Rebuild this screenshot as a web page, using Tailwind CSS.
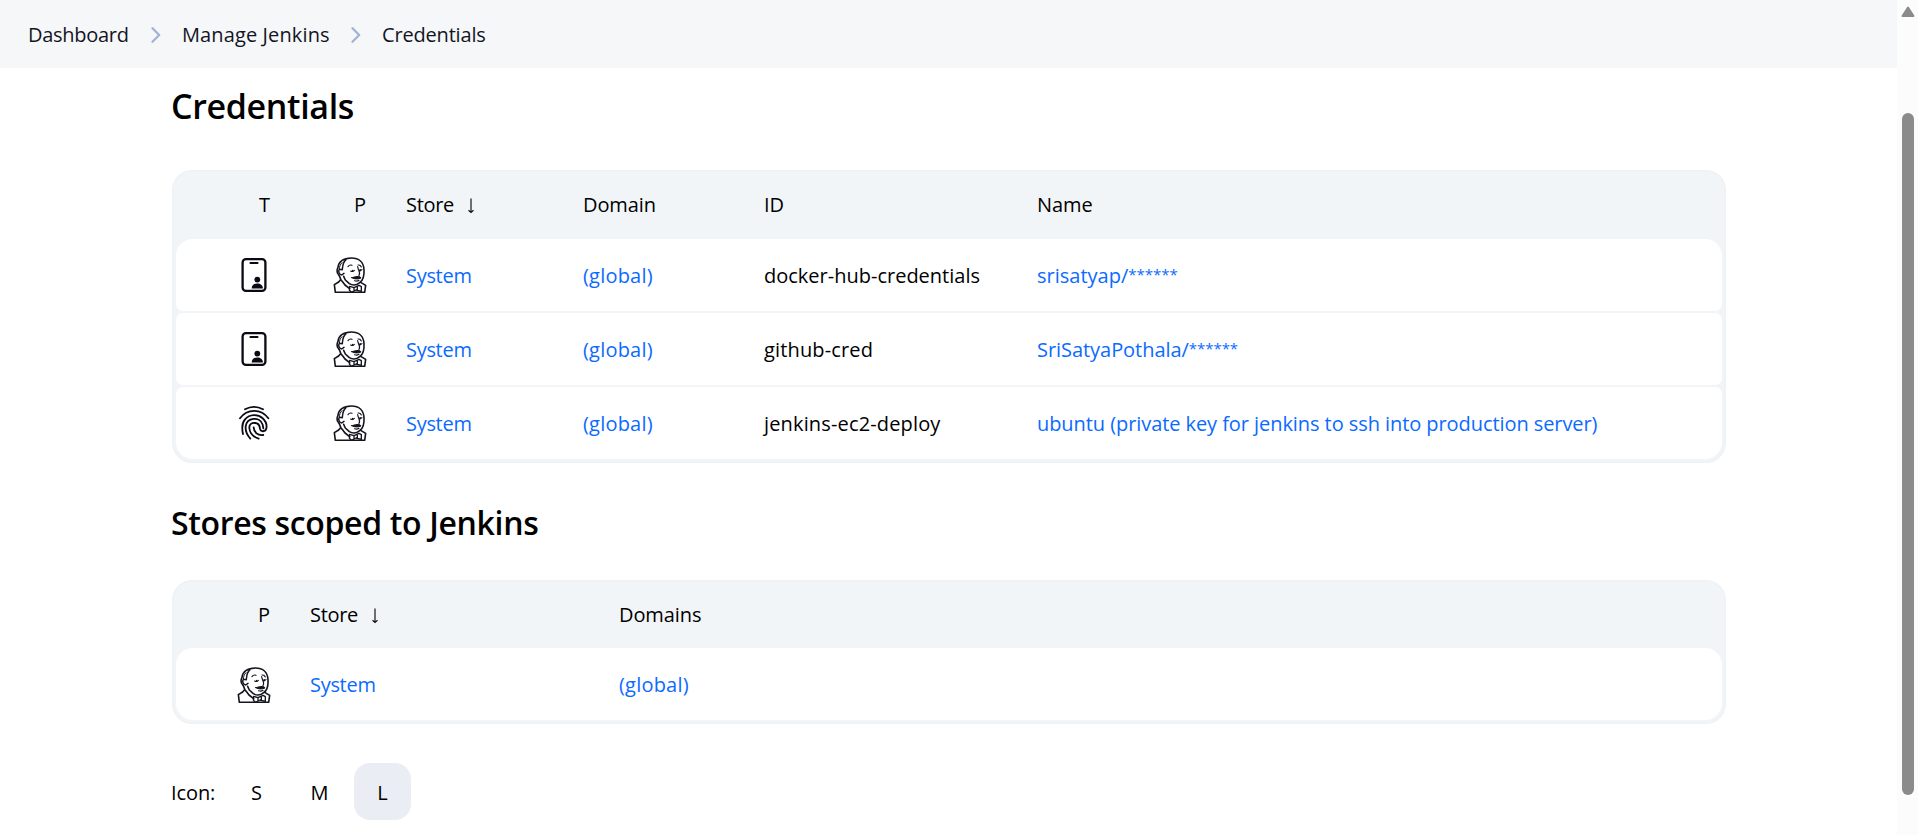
<!DOCTYPE html>
<html lang="en">
<head>
<meta charset="utf-8">
<title>Credentials</title>
<script src="https://cdn.jsdelivr.net/npm/@tailwindcss/browser@4"></script>
</head>
<body class="h-[835px] overflow-hidden bg-white text-[20px] text-[#14141f] font-['Open_Sans','Noto_Sans',sans-serif]">
<svg class="hidden">
  <symbol id="chevron" viewBox="0 0 10 16"><path d="M1.5 1.2 8.2 8 1.5 14.8" fill="none" stroke="#a0b3d2" stroke-width="2.2" stroke-linecap="round" stroke-linejoin="round"/></symbol>
  <symbol id="arrow" viewBox="0 0 8 16"><path d="M4 .5V14.500M1.500 12.200 4 14.500l2.500-2.300" fill="none" stroke="#14141f" stroke-width="1.2"/></symbol>
  <symbol id="badge" viewBox="0 0 36 36">
    <rect x="6.6" y="2.1" width="22.8" height="31.8" rx="3.4" fill="none" stroke="#0a0a14" stroke-width="2.3"/>
    <path d="M14.5 6h7" stroke="#0a0a14" stroke-width="2.2" stroke-linecap="round"/>
    <circle cx="21.3" cy="22.6" r="2.9" fill="#0a0a14"/>
    <path d="M15.7 31.4c0-3.3 2.6-4.9 5.6-4.9s5.6 1.6 5.6 4.9z" fill="#0a0a14"/>
  </symbol>
  <symbol id="finger" viewBox="48 60 108 108">
    <g fill="none" stroke="#0a0a14" stroke-width="5.4" stroke-linecap="round">
      <path d="M75 73Q102 58 129 73"/>
      <path d="M60 100C81 70 124 70 145 100"/>
      <path d="M69 147C64 124 67 112 75 103C89 87 114 87 127 99C138 109 141 121 139 130C137 141 122 142 120 131C119 121 115 114 105 114"/>
      <path d="M91 161C80 149 76 137 77 125C80 96 120 94 128 119L130 130"/>
      <path d="M116 161C98 155 89 143 88 129C87 117 96 113 105 114"/>
      <path d="M101 127C102 143 113 152 130 150"/>
    </g>
  </symbol>
  <symbol id="jenkins" viewBox="20 21 108 108">
    <g fill="none" stroke="#14141f" stroke-width="4.8" stroke-linecap="round" stroke-linejoin="round">
      <path d="M48 92C43 84 45 79 39 73C34 67 35 58 38 52C39 36 54 24 78 24C101 24 115 37 116 59C117 76 115 90 103 98C93 107 80 106 72 101L60 90L55 79"/>
      <path d="M62 29C52 37 52 47 51 59L42 58C38 64 41 74 49 75L56 70" stroke-width="4.400"/>
      <path d="M50 38C44 43 43 50 42 56" stroke-width="3"/>
      <path d="M68 50Q73 43 80 46M98 45Q105 44 108 51M76 63Q82 67 87 61M101 60Q105 64 110 59M97 50C99 63 107 69 101 76" stroke-width="3.400"/>
      <path d="M82 61v3M105 59v3" stroke-width="4"/>
      <path d="M79 83C85 83 89 79 95 80C100 77 105 80 107 84C100 87 90 89 79 83Z" fill="#14141f" stroke-width="3"/>
      <path d="M88 92Q95 95 101 91" stroke-width="3.400"/>
      <path d="M45 90 40 96 27 104 30 127H118L121 106 106 97M50 93 59 105 73 116"/>
      <path d="M73 109 86 113 101 106 108 110V124L92 120 78 127 72 120ZM86 113V121M96 111V121" stroke-width="4"/>
    </g>
  </symbol>
</svg>
<div class="flex h-full">
  <div class="h-full w-[1897px]">
    <nav class="flex h-[68px] items-center bg-[#f5f7f9] pt-px pl-[28px]">
      <a class="w-[123px] tracking-[-0.28px]">Dashboard</a>
      <svg class="mr-[21px] h-4 w-[10px]"><use href="#chevron"/></svg>
      <a class="w-[169px] tracking-[0.12px]">Manage Jenkins</a>
      <svg class="mr-[21px] h-4 w-[10px]"><use href="#chevron"/></svg>
      <a class="tracking-[-0.18px]">Credentials</a>
    </nav>
    <main class="ml-[172px] w-[1554px]">
      <h1 class="-ml-px mb-[27px] flex h-[75px] items-center pt-px text-[34px] font-semibold tracking-[-0.35px] text-black">Credentials</h1>

      <div class="rounded-[20px] border-2 border-[#eff3f6] bg-[#f2f5f8] px-[2px] pb-[2px]">
        <div class="grid h-[67px] grid-cols-[96px_96px_215px_181px_273px_1fr] items-center pb-[2px] tracking-[-0.1px] text-black">
          <span class="pr-[2px] text-right">T</span>
          <span class="pr-[2px] text-right">P</span>
          <span class="flex items-center pl-[38px]"><span class="w-[61px] tracking-[-0.3px]">Store</span><svg class="mt-[2px] h-4 w-2"><use href="#arrow"/></svg></span>
          <span>Domain</span><span>ID</span><span>Name</span>
        </div>
        <div class="flex flex-col gap-[2px]">
          <div class="grid h-[72px] grid-cols-[96px_96px_215px_181px_273px_1fr] items-center rounded-t-[17px] rounded-b-[7px] bg-white pt-px">
            <svg class="-mt-px size-9 justify-self-end"><use href="#badge"/></svg>
            <svg class="-mt-px size-9 justify-self-end"><use href="#jenkins"/></svg>
            <a class="pl-[38px] tracking-[-0.3px] text-[#0b6aff]">System</a>
            <a class="tracking-[0.2px] text-[#0b6aff]">(global)</a>
            <span class="text-black">docker-hub-credentials</span>
            <a class="flex items-center text-[#0b6aff]">srisatyap/<span class="mb-[3px] text-[15px]">******</span></a>
          </div>
          <div class="grid h-[72px] grid-cols-[96px_96px_215px_181px_273px_1fr] items-center rounded-[7px] bg-white pt-px">
            <svg class="-mt-px size-9 justify-self-end"><use href="#badge"/></svg>
            <svg class="-mt-px size-9 justify-self-end"><use href="#jenkins"/></svg>
            <a class="pl-[38px] tracking-[-0.3px] text-[#0b6aff]">System</a>
            <a class="tracking-[0.2px] text-[#0b6aff]">(global)</a>
            <span class="tracking-[0.15px] text-black">github-cred</span>
            <a class="flex items-center tracking-[-0.05px] text-[#0b6aff]">SriSatyaPothala/<span class="mb-[3px] text-[15px]">******</span></a>
          </div>
          <div class="grid h-[72px] grid-cols-[96px_96px_215px_181px_273px_1fr] items-center rounded-t-[7px] rounded-b-[17px] bg-white pt-px">
            <svg class="-mt-px size-9 justify-self-end"><use href="#finger"/></svg>
            <svg class="-mt-px size-9 justify-self-end"><use href="#jenkins"/></svg>
            <a class="pl-[38px] tracking-[-0.3px] text-[#0b6aff]">System</a>
            <a class="tracking-[0.2px] text-[#0b6aff]">(global)</a>
            <span class="tracking-[0.15px] text-black">jenkins-ec2-deploy</span>
            <a class="tracking-[-0.07px] text-[#0b6aff]">ubuntu (private key for jenkins to ssh into production server)</a>
          </div>
        </div>
      </div>

      <h2 class="-ml-px mt-[38px] mb-[35px] flex h-[44px] items-center text-[32px] font-semibold tracking-[-0.34px] text-black">Stores scoped to Jenkins</h2>

      <div class="rounded-[20px] border-2 border-[#eff3f6] bg-[#f2f5f8] px-[2px] pb-[2px]">
        <div class="grid h-[66px] grid-cols-[96px_347px_1fr] items-center tracking-[-0.1px] text-black">
          <span class="pr-[2px] text-right">P</span>
          <span class="flex items-center pl-[38px]"><span class="w-[61px] tracking-[-0.3px]">Store</span><svg class="mt-[2px] h-4 w-2"><use href="#arrow"/></svg></span>
          <span>Domains</span>
        </div>
        <div class="grid h-[72px] grid-cols-[96px_347px_1fr] items-center rounded-[17px] bg-white pt-[2px]">
          <svg class="-mt-px size-9 justify-self-end"><use href="#jenkins"/></svg>
          <a class="pl-[38px] tracking-[-0.3px] text-[#0b6aff]">System</a>
          <a class="tracking-[0.2px] text-[#0b6aff]">(global)</a>
        </div>
      </div>

      <div class="mt-[39px] flex items-center gap-[6px] text-black">
        <span class="-ml-px w-[51px] pt-[2px] tracking-[-0.1px]">Icon:</span>
        <span class="flex size-[57px] items-center justify-center pt-[2px]">S</span>
        <span class="flex size-[57px] items-center justify-center pt-[2px]">M</span>
        <span class="flex size-[57px] items-center justify-center rounded-[16px] bg-[#ebedf5] pt-[2px]">L</span>
      </div>
    </main>
  </div>
  <div class="flex h-full w-[21px] flex-col items-center bg-[#fcfcfc] pt-[6px] pl-px">
    <svg class="h-[12px] w-[14px]" viewBox="0 0 14 12"><path d="M7 1.5 12.5 10H1.5Z" fill="#8b8b8b" stroke="#8b8b8b" stroke-width="2" stroke-linejoin="round"/></svg>
    <div class="mt-[95px] h-[682px] w-[12px] rounded-full bg-[#8b8b8b]"></div>
  </div>
</div>
</body>
</html>
